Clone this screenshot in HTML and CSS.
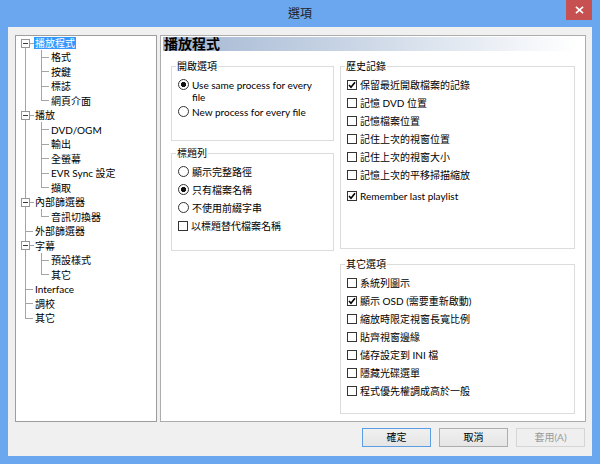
FILE: index.html
```html
<!DOCTYPE html>
<html lang="zh-Hant">
<head>
<meta charset="utf-8">
<title>選項</title>
<link rel="stylesheet" href="styles.css">
</head>
<body>
<div class="window">
  <div class="titlebar">
    <div class="title">選項</div>
    <div class="close"><svg viewBox="0 0 10 9" width="9" height="8"><path d="M1 1 L9 8 M9 1 L1 8" stroke="#fff" stroke-width="1.8" fill="none"/></svg></div>
  </div>
  <div class="client">
    <div class="panes">
      <div class="tree">
        <div class="row"><span class="c first"><i class="box"></i></span><span class="label sel">播放程式</span></div>
        <div class="row"><span class="c v"></span><span class="c tee"></span><span class="label">格式</span></div>
        <div class="row"><span class="c v"></span><span class="c tee"></span><span class="label">按鍵</span></div>
        <div class="row"><span class="c v"></span><span class="c tee"></span><span class="label">標誌</span></div>
        <div class="row"><span class="c v"></span><span class="c elbow"></span><span class="label">網頁介面</span></div>
        <div class="row"><span class="c exp"><i class="box"></i></span><span class="label">播放</span></div>
        <div class="row"><span class="c v"></span><span class="c tee"></span><span class="label">DVD/OGM</span></div>
        <div class="row"><span class="c v"></span><span class="c tee"></span><span class="label">輸出</span></div>
        <div class="row"><span class="c v"></span><span class="c tee"></span><span class="label">全螢幕</span></div>
        <div class="row"><span class="c v"></span><span class="c tee"></span><span class="label">EVR Sync 設定</span></div>
        <div class="row"><span class="c v"></span><span class="c elbow"></span><span class="label">擷取</span></div>
        <div class="row"><span class="c exp"><i class="box"></i></span><span class="label">內部篩選器</span></div>
        <div class="row"><span class="c v"></span><span class="c elbow"></span><span class="label">音訊切換器</span></div>
        <div class="row"><span class="c tee"></span><span class="label">外部篩選器</span></div>
        <div class="row"><span class="c exp"><i class="box"></i></span><span class="label">字幕</span></div>
        <div class="row"><span class="c v"></span><span class="c tee"></span><span class="label">預設樣式</span></div>
        <div class="row"><span class="c v"></span><span class="c elbow"></span><span class="label">其它</span></div>
        <div class="row"><span class="c tee"></span><span class="label">Interface</span></div>
        <div class="row"><span class="c tee"></span><span class="label">調校</span></div>
        <div class="row"><span class="c elbow"></span><span class="label">其它</span></div>
      </div>
      <div class="page">
        <div class="page-header">播放程式</div>
        <div class="columns">
          <div class="col col-left">
            <fieldset class="group g-open">
              <legend>開啟選項</legend>
              <div class="opt wrapped"><span class="rb on"></span><span class="txt">Use same process for every<br>file</span></div>
              <div class="opt"><span class="rb"></span><span class="txt">New process for every file</span></div>
            </fieldset>
            <fieldset class="group g-title">
              <legend>標題列</legend>
              <div class="opt"><span class="rb"></span><span class="txt">顯示完整路徑</span></div>
              <div class="opt"><span class="rb on"></span><span class="txt">只有檔案名稱</span></div>
              <div class="opt"><span class="rb"></span><span class="txt">不使用前綴字串</span></div>
              <div class="opt"><span class="cb"></span><span class="txt">以標題替代檔案名稱</span></div>
            </fieldset>
          </div>
          <div class="col col-right">
            <fieldset class="group g-history">
              <legend>歷史記錄</legend>
              <div class="opt"><span class="cb"><svg viewBox="0 0 8 8" width="8" height="8"><path d="M1 4 L3 6.3 L7 1.2" fill="none" stroke="#000" stroke-width="1.6"/></svg></span><span class="txt">保留最近開啟檔案的記錄</span></div>
              <div class="opt"><span class="cb"></span><span class="txt">記憶 DVD 位置</span></div>
              <div class="opt"><span class="cb"></span><span class="txt">記憶檔案位置</span></div>
              <div class="opt"><span class="cb"></span><span class="txt">記住上次的視窗位置</span></div>
              <div class="opt"><span class="cb"></span><span class="txt">記住上次的視窗大小</span></div>
              <div class="opt"><span class="cb"></span><span class="txt">記憶上次的平移掃描縮放</span></div>
              <div class="opt spaced"><span class="cb"><svg viewBox="0 0 8 8" width="8" height="8"><path d="M1 4 L3 6.3 L7 1.2" fill="none" stroke="#000" stroke-width="1.6"/></svg></span><span class="txt">Remember last playlist</span></div>
            </fieldset>
            <fieldset class="group g-other">
              <legend>其它選項</legend>
              <div class="opt"><span class="cb"></span><span class="txt">系統列圖示</span></div>
              <div class="opt"><span class="cb"><svg viewBox="0 0 8 8" width="8" height="8"><path d="M1 4 L3 6.3 L7 1.2" fill="none" stroke="#000" stroke-width="1.6"/></svg></span><span class="txt">顯示 OSD (需要重新啟動)</span></div>
              <div class="opt"><span class="cb"></span><span class="txt">縮放時限定視窗長寬比例</span></div>
              <div class="opt"><span class="cb"></span><span class="txt">貼齊視窗邊緣</span></div>
              <div class="opt"><span class="cb"></span><span class="txt">儲存設定到 INI 檔</span></div>
              <div class="opt"><span class="cb"></span><span class="txt">隱藏光碟選單</span></div>
              <div class="opt"><span class="cb"></span><span class="txt">程式優先權調成高於一般</span></div>
            </fieldset>
          </div>
        </div>
      </div>
    </div>
    <div class="buttons">
      <div class="btn default">確定</div>
      <div class="btn">取消</div>
      <div class="btn disabled">套用(A)</div>
    </div>
  </div>
</div>
</body>
</html>
```
FILE: styles.css
```css
* { box-sizing: border-box; }
html, body { margin: 0; padding: 0; }
body {
  width: 600px;
  height: 464px;
  overflow: hidden;
  background: #6aa7ee;
  font-family: "Lato", "Noto Sans CJK TC", sans-serif;
  font-size: 10px;
  color: #000;
}
.window { display: flex; flex-direction: column; height: 464px; }

/* title bar */
.titlebar { height: 27px; display: flex; align-items: flex-start; padding-left: 34px; }
.title { flex: 1; text-align: center; font-size: 12px; line-height: 27px; color: #222; }
.close {
  width: 26px; height: 20px; margin-right: 8px;
  background: #c75050;
  display: flex; align-items: center; justify-content: center;
}

/* client area */
.client {
  flex: 1;
  margin: 0 8px 8px;
  background: #f0f0f0;
  padding: 8px 7px 0;
  display: flex; flex-direction: column;
}
.panes { display: flex; height: 387px; margin-right: -1px; }

/* tree */
.tree {
  width: 142px;
  border: 1px solid #9d9d9d;
  background: #fff;
  padding-left: 2px;
}
.row { height: 14px; display: flex; align-items: center; }
.row:nth-child(2n+3) { height: 15px; }
.c {
  width: 16px; height: 100%;
  flex: none;
  display: flex; align-items: flex-start;
  background-repeat: no-repeat;
}
.c.v {
  background-image: linear-gradient(#a5a5a5, #a5a5a5);
  background-size: 1px 100%;
  background-position: 7px 0;
}
.c.tee {
  background-image: linear-gradient(#a5a5a5, #a5a5a5), linear-gradient(#a5a5a5, #a5a5a5);
  background-size: 1px 100%, 8px 1px;
  background-position: 7px 0, 7px 7px;
}
.c.elbow {
  background-image: linear-gradient(#a5a5a5, #a5a5a5), linear-gradient(#a5a5a5, #a5a5a5);
  background-size: 1px 8px, 8px 1px;
  background-position: 7px 0, 7px 7px;
}
.c.exp {
  background-image: linear-gradient(#a5a5a5, #a5a5a5), linear-gradient(#a5a5a5, #a5a5a5);
  background-size: 1px 100%, 5px 1px;
  background-position: 7px 0, 11px 7px;
}
.c.first {
  background-image: linear-gradient(#a5a5a5, #a5a5a5), linear-gradient(#a5a5a5, #a5a5a5);
  background-size: 1px 100%, 5px 1px;
  background-position: 7px 7px, 11px 7px;
}
.box {
  display: block;
  width: 9px; height: 9px;
  margin: 3px 0 0 3px;
  border: 1px solid #969696;
  background-color: #fff;
  background-image: linear-gradient(#3a3a3a, #3a3a3a);
  background-size: 5px 1px;
  background-position: 1px 3px;
  background-repeat: no-repeat;
}
.label { padding: 0 1px; line-height: 12px; white-space: nowrap; }
.label.sel { background: #3399ff; color: #fff; }

/* page */
.page {
  flex: 1;
  margin-left: 3px;
  border: 1px solid #acacac;
  background: #fff;
  padding: 1px 8px 0 2px;
}
.page-header {
  height: 14px;
  line-height: 14px;
  padding-left: 1px;
  font-size: 14px;
  font-weight: 700;
  background: linear-gradient(90deg, #a2b6d2 0%, #c9d5e5 45%, #ffffff 100%);
}
.columns { display: flex; gap: 6px; margin: 9px 0 0 8px; }
.col { display: flex; flex-direction: column; }
.col-left { width: 163px; }
.col-right { width: 235px; }

.group {
  margin: 0;
  padding: 4px 0 0 0;
  border: 1px solid #dcdcdc;
  min-width: 0;
}
.group legend {
  margin-left: 4px;
  padding: 0 1px;
  line-height: 12px;
}
.g-open { height: 81px; }
.g-title { height: 104px; margin-top: 6px; }
.g-history { height: 189px; }
.g-other { height: 156px; margin-top: 9px; }

.opt {
  display: flex;
  align-items: flex-start;
  padding: 3px 0 3px 6px;
  line-height: 12px;
  white-space: nowrap;
}
.opt.wrapped { padding-bottom: 0; }
.opt.spaced { margin-top: 3px; }
.rb {
  flex: none;
  width: 11px; height: 11px;
  margin: 0 3px 0 0;
  border: 1px solid #333;
  border-radius: 50%;
  background: #fff;
}
.rb.on { background: radial-gradient(circle, #111 0 2.3px, #fff 2.9px); }
.cb {
  flex: none;
  width: 10px; height: 10px;
  margin: 1px 3px 0 0;
  border: 1px solid #333;
  background: #fff;
  display: flex; align-items: center; justify-content: center;
}
.cb svg { display: block; }

/* buttons */
.buttons {
  display: flex;
  justify-content: flex-end;
  gap: 8px;
  margin-top: 6px;
}
.btn {
  width: 69px; height: 19px;
  border: 1px solid #adadad;
  background: linear-gradient(#f0f0f0, #e5e5e5);
  text-align: center;
  line-height: 17px;
  color: #000;
}
.btn.default { border-color: #5b9ee3; }
.btn.disabled { border-color: #d5d5d5; background: #efefef; color: #9a9a9a; }
```
